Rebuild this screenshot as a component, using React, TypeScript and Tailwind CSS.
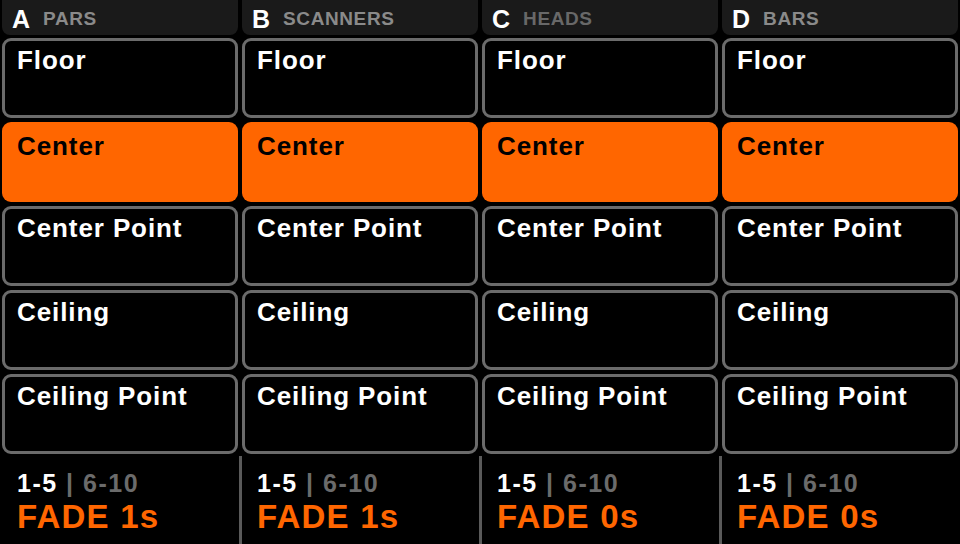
import React from "react";

const columns = [
  { letter: "A", name: "PARS", nameColor: "text-[#8a8a8a]", fade: "FADE 1s" },
  { letter: "B", name: "SCANNERS", nameColor: "text-[#8a8a8a]", fade: "FADE 1s" },
  { letter: "C", name: "HEADS", nameColor: "text-[#686868]", fade: "FADE 0s" },
  { letter: "D", name: "BARS", nameColor: "text-[#8a8a8a]", fade: "FADE 0s" },
];

const items = ["Floor", "Center", "Center Point", "Ceiling", "Ceiling Point"];

export default function App() {
  return (
    <div
      className="w-[960px] h-[544px] bg-black overflow-hidden flex flex-col"
      style={{ fontFamily: '"Liberation Sans", Arial, sans-serif' }}
    >
      <div className="grid grid-cols-4 gap-x-[4px] px-[2px]">
        {columns.map((c) => (
          <div key={c.letter} className="flex flex-col">
            <div className="h-[35px] bg-[#1a1a1a] rounded-b-[8px] flex items-center pl-[10px] pt-[4px] gap-[13px]">
              <span className="text-white font-bold text-[25px] leading-[25px]">{c.letter}</span>
              <span className={`${c.nameColor} font-bold text-[19px] leading-[20px] tracking-[0.6px] mt-[-2px]`}>
                {c.name}
              </span>
            </div>
            <div className="flex flex-col gap-[4px] mt-[3px]">
              {items.map((it) =>
                it === "Center" ? (
                  <div
                    key={it}
                    className="h-[80px] rounded-[9px] bg-[#ff6600] pl-[15px] pt-[11px]"
                  >
                    <span className="text-black font-bold text-[26px] leading-[26px] tracking-[0.9px] block">
                      {it}
                    </span>
                  </div>
                ) : (
                  <div
                    key={it}
                    className="h-[80px] rounded-[9px] border-[3px] border-[#6b6b6b] bg-black pl-[12px] pt-[6px]"
                  >
                    <span className="text-white font-bold text-[26px] leading-[26px] tracking-[0.9px] block">
                      {it}
                    </span>
                  </div>
                )
              )}
            </div>
          </div>
        ))}
      </div>
      <div className="grid grid-cols-4 gap-x-[4px] px-[2px] flex-1 mt-[2px]">
        {columns.map((c, i) => (
          <div
            key={c.letter}
            className={
              i === 0
                ? "pl-[15px] pt-[15px] flex flex-col"
                : "-ml-[3px] border-l-[3px] border-[#5a5a5a] pl-[15px] pt-[15px] flex flex-col"
            }
          >
            <div className="font-bold text-[25px] leading-[24px] tracking-[1.5px] whitespace-nowrap">
              <span className="text-white">1-5</span>
              <span className="text-[#6b6b6b]"> | 6-10</span>
            </div>
            <div className="font-bold text-[33px] leading-[33px] tracking-[1.2px] text-[#ff6600] mt-[5px] whitespace-nowrap">
              {c.fade}
            </div>
          </div>
        ))}
      </div>
    </div>
  );
}
